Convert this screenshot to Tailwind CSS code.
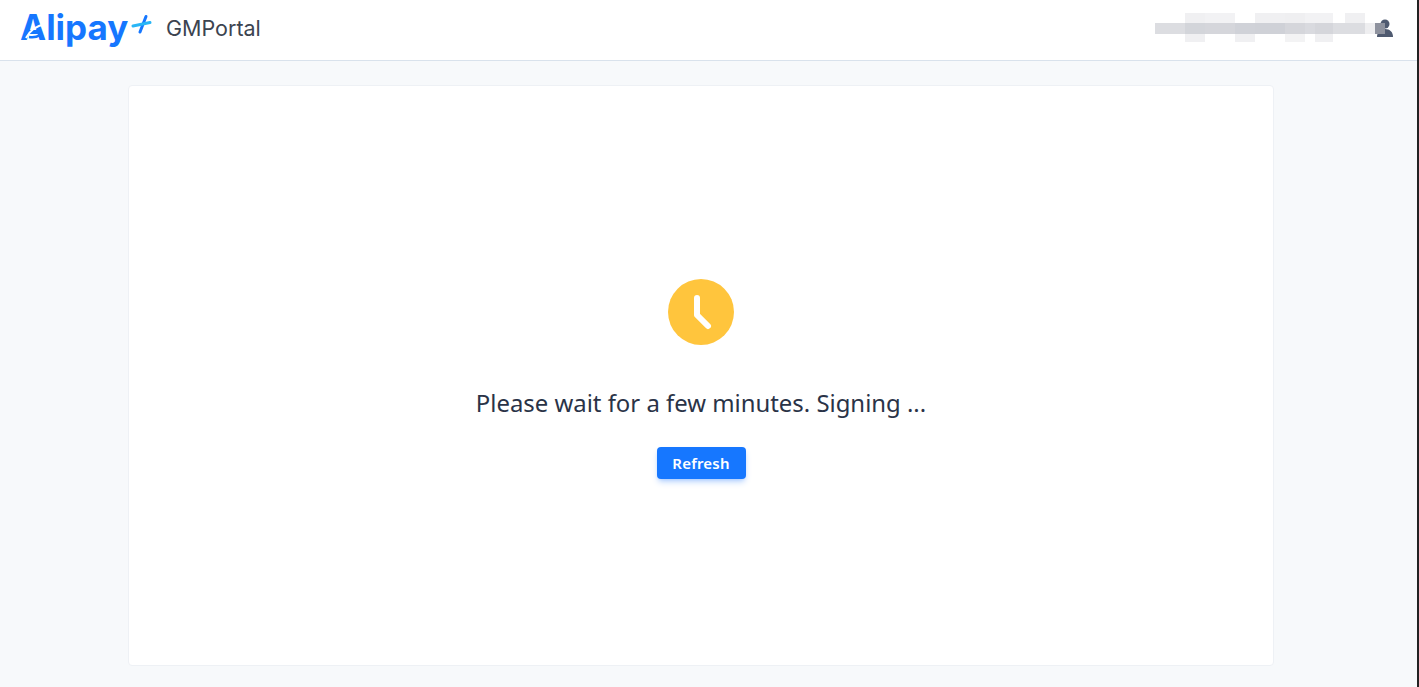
<!DOCTYPE html>
<html lang="en">
<head>
    <meta charset="UTF-8">
    <title>GMPortal</title>
    <script src="https://cdn.jsdelivr.net/npm/@tailwindcss/browser@4"></script>
</head>
<body class="bg-[#222222] font-['Noto_Sans',sans-serif] h-[687px] overflow-hidden">
  <div class="w-[1417px] h-[687px] bg-[#f7f9fb]">
    <!-- header -->
    <header class="h-[61px] bg-white border-b border-[#d9e2ec] flex items-center justify-between pl-5 pr-[24px]">
        <div class="flex items-center">
            <div class="relative flex items-center text-[#1677ff] text-[35px] font-bold leading-none font-['Inter',sans-serif] w-[132px] h-[40px] pb-[6px]">
                Alipay
                <!-- swoosh across the A -->
                <svg width="28" height="24" viewBox="0 0 28 24" class="absolute left-0 top-[6px]"><path d="M6 22C10 14 16 10 25 8" fill="none" stroke="#fff" stroke-width="2"/><path d="M9 21c5 1 8 0 11-2" fill="none" stroke="#1677ff" stroke-width="2.500"/></svg>
                <!-- spark -->
                <svg width="22" height="20" viewBox="0 0 22 20" class="absolute left-[110px] top-[4px]"><path d="M16 2.500L10 18" fill="none" stroke="#1677ff" stroke-width="3" stroke-linecap="round"/><path d="M3 12L20 8.500" fill="none" stroke="#29b6f6" stroke-width="3" stroke-linecap="round"/></svg>
            </div>
            <span class="ml-[14px] pb-[3px] text-[21.500px] text-[#3c4450] font-['Inter',sans-serif]">GMPortal</span>
        </div>
        <!-- masked user name -->
        <div class="self-start pt-[13px] flex items-start">
            <div class="flex">
                <div class="w-[30px]"><div class="h-[10px]"></div><div class="h-[11px] bg-[#dcdde1]"></div></div>
                <div class="w-[20px]"><div class="h-[10px] bg-[#f0f0f2]"></div><div class="h-[11px] bg-[#d3d5da]"></div><div class="h-2 bg-[#f0f0f2]"></div></div>
                <div class="w-[30px]"><div class="h-[10px] bg-[#f2f2f4]"></div><div class="h-[11px] bg-[#d5d6db]"></div></div>
                <div class="w-[20px]"><div class="h-[10px]"></div><div class="h-[11px] bg-[#d0d2d8]"></div><div class="h-2 bg-[#f0f0f2]"></div></div>
                <div class="w-[30px]"><div class="h-[10px] bg-[#f0f0f2]"></div><div class="h-[11px] bg-[#cfd1d7]"></div></div>
                <div class="w-[20px]"><div class="h-[10px] bg-[#efeff1]"></div><div class="h-[11px] bg-[#d5d6db]"></div><div class="h-2 bg-[#f3f3f4]"></div></div>
                <div class="w-[10px]"><div class="h-[10px] bg-[#f2f2f4]"></div><div class="h-[11px] bg-[#d9dadf]"></div></div>
                <div class="w-[18px]"><div class="h-[10px] bg-[#f2f2f4]"></div><div class="h-[11px] bg-[#d5d6db]"></div><div class="h-2 bg-[#f0f0f2]"></div></div>
                <div class="w-[12px]"><div class="h-[10px]"></div><div class="h-[11px] bg-[#dcdde1]"></div></div>
                <div class="w-[20px]"><div class="h-[10px] bg-[#f0f0f2]"></div><div class="h-[11px] bg-[#dcdde1]"></div></div>
                <div class="w-[10px]"><div class="h-[10px]"></div><div class="h-[11px] bg-[#eeeef0]"></div></div>
            </div>
            <svg width="18" height="18" viewBox="0 0 18 18" class="mt-[6px]"><circle cx="10" cy="5" r="4.500" fill="#4f5a70"/><path d="M2 18c0-5 3-8 8-8s8 3 8 8z" fill="#4f5a70"/><rect x="0" y="4" width="10" height="11" fill="#8e929e"/></svg>
        </div>
    </header>
    <!-- card -->
    <main class="w-[1146px] h-[581px] ml-[128px] mt-[24px] bg-white border border-[#eef1f5] rounded flex flex-col items-center pt-[193px]">
        <svg width="67" height="67" viewBox="0 0 67 67">
            <circle cx="33" cy="33" r="33" fill="#ffc53d"/>
            <path d="M29 19v17l11 11" fill="none" stroke="#fff" stroke-width="6" stroke-linecap="round" stroke-linejoin="round"/>
        </svg>
        <p class="mt-[39px] text-[23.900px] leading-[36px] text-[#2a3347]">Please wait for a few minutes. Signing ...</p>
        <button class="mt-[26px] w-[89px] h-8 bg-[#1677ff] rounded text-white text-[15px] font-semibold tracking-[0.2px] shadow-md shadow-blue-500/30">Refresh</button>
    </main>
  </div>
</body>
</html>
